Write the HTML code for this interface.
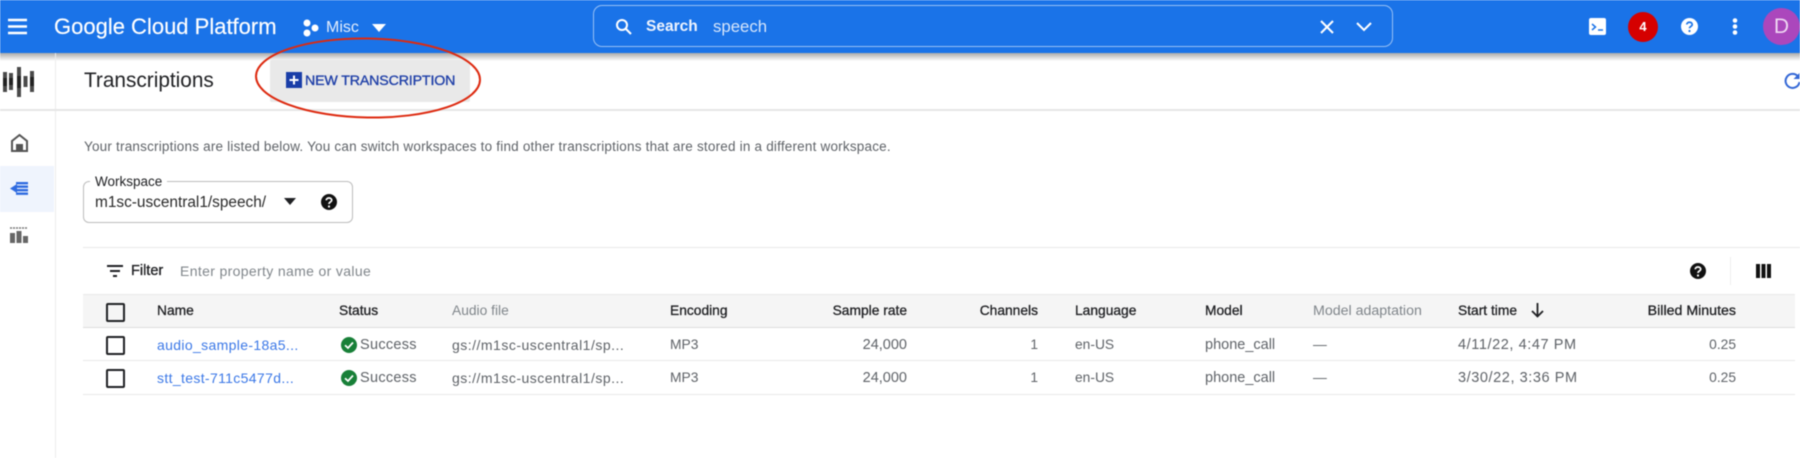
<!DOCTYPE html>
<html><head><meta charset="utf-8"><style>
html,body{margin:0;padding:0;background:#fff}
#p{position:relative;width:1800px;height:458px;overflow:hidden;background:#fff;font-family:"Liberation Sans",sans-serif;filter:blur(.45px)}
.a{position:absolute;white-space:nowrap}
.t{position:absolute;white-space:nowrap;font-size:13.800px;line-height:16px;color:#5f6368}
.h{color:#202124;font-weight:500;-webkit-text-stroke:.3px #202124}
.r{text-align:right}
.g{font-size:14px;letter-spacing:.035em}
.w{font-size:14.500px}
.d{font-size:14.500px;letter-spacing:.04em}
.cb{position:absolute;left:106px;width:15px;height:15px;border:2px solid #202124;border-radius:2px}
svg{position:absolute;overflow:visible}
</style></head><body><div id="p">
<div class="a" style="left:0;top:53px;width:1800px;height:8px;background:linear-gradient(#aaa,#fff)"></div>
<div class="a" style="left:0;top:0;width:1800px;height:53px;background:#1a73e8"></div>
<svg style="left:8px;top:18px" width="20" height="18"><path d="M0 2H19M0 8.500H19M0 15H19" stroke="#fff" stroke-width="2.400"/></svg>
<div class="a" style="left:54px;top:14px;font-size:22px;line-height:26px;color:#fff;-webkit-text-stroke:.15px #fff">Google Cloud Platform</div>
<svg style="left:302px;top:19px" width="18" height="18"><circle cx="5" cy="4" r="3.500" fill="#fff"/><circle cx="5" cy="14" r="3.500" fill="#fff"/><circle cx="13" cy="9" r="3.500" fill="#fff"/></svg>
<div class="a" style="left:326px;top:19px;font-size:16px;line-height:18px;color:#e3edfc">Misc</div>
<svg style="left:372px;top:24px" width="14" height="8"><path d="M0 0H14L7 8Z" fill="#fff"/></svg>
<div class="a" style="left:593px;top:5px;width:798px;height:40px;border:1.500px solid rgba(255,255,255,.55);border-radius:9px"></div>
<svg style="left:615px;top:18px" width="18" height="18"><circle cx="7" cy="7" r="5" fill="none" stroke="#fff" stroke-width="2"/><path d="M10.500 10.500L16 16" stroke="#fff" stroke-width="2"/></svg>
<div class="a" style="left:646px;top:18px;font-size:15.500px;line-height:18px;color:#eef4fe;font-weight:bold">Search</div>
<div class="a" style="left:713px;top:18px;font-size:16.800px;line-height:18px;color:#d5e5fb">speech</div>
<svg style="left:1320px;top:20px" width="14" height="14"><path d="M1 1L13 13M13 1L1 13" stroke="#fff" stroke-width="2"/></svg>
<svg style="left:1356px;top:22px" width="16" height="10"><path d="M1 1L8 8L15 1" fill="none" stroke="#fff" stroke-width="2"/></svg>
<svg style="left:1589px;top:18px" width="17" height="17"><rect width="17" height="17" rx="2" fill="#fff"/><path d="M3 6L6.500 9L3 12" fill="none" stroke="#1a73e8" stroke-width="1.500"/><path d="M9 12H14" stroke="#1a73e8" stroke-width="1.500"/></svg>
<div class="a" style="left:1628px;top:12px;width:30px;height:30px;border-radius:50%;background:#d50000;color:#fff;font-size:13px;font-weight:bold;line-height:30px;text-align:center">4</div>
<svg style="left:1681px;top:18px" width="17" height="17"><circle cx="8.500" cy="8.500" r="8.500" fill="#fff"/><path d="M5.800 6.500C5.800 3.500 11.200 3.500 11.200 6.500C11.200 8.500 8.500 8.300 8.500 10.300" fill="none" stroke="#1a73e8" stroke-width="1.700"/><circle cx="8.500" cy="13" r="1.100" fill="#1a73e8"/></svg>
<svg style="left:1732px;top:18px" width="6" height="17"><circle cx="3" cy="2.500" r="2.300" fill="#fff"/><circle cx="3" cy="8.500" r="2.300" fill="#fff"/><circle cx="3" cy="14.500" r="2.300" fill="#fff"/></svg>
<div class="a" style="left:1763px;top:8px;width:37px;height:37px;border-radius:50%;background:#ab47bc;color:#eed7f2;font-size:21px;line-height:37px;text-align:center">D</div>

<div class="a" style="left:54.500px;top:53px;width:1.500px;height:405px;background:#ececec"></div>
<div class="a" style="left:0;top:109px;width:1800px;height:1.500px;background:#e6e6e6"></div>
<svg style="left:0;top:0" width="40" height="100"><path d="M5 72V92M11 73V90M19 67V97M25.500 76V87M32 71V92" stroke="#4a4a4a" stroke-width="4"/><path d="M5 78V86M11 78V85M19 76V88M32 77V86" stroke="#222" stroke-width="4"/></svg>
<div class="a" style="left:84px;top:69px;font-size:20.800px;line-height:24px;color:#202124">Transcriptions</div>
<div class="a" style="left:270px;top:60px;width:200px;height:42px;background:#e9e9e9;border-radius:2px"></div>
<svg style="left:286px;top:72px" width="16" height="16"><rect width="16" height="16" fill="#1a3ea8"/><path d="M8 3.500V12.500M3.500 8H12.500" stroke="#fff" stroke-width="2"/></svg>
<div class="a" style="left:305px;top:73px;font-size:14.200px;line-height:16px;color:#2040a8;-webkit-text-stroke:.35px #2040a8;letter-spacing:-.01em">NEW TRANSCRIPTION</div>
<svg style="left:0;top:0" width="1800" height="458"><ellipse cx="368" cy="78" rx="112" ry="39.500" fill="none" stroke="#dd2a10" stroke-width="2" transform="rotate(1 368 78)"/></svg>
<svg style="left:1784px;top:72px" width="18" height="18"><path d="M14 4.500A7 7 0 1 0 15.500 10" fill="none" stroke="#3367d6" stroke-width="2"/><path d="M15.500 1V7H9.500Z" fill="#3367d6"/></svg>

<svg style="left:11px;top:134px" width="17" height="18"><path d="M1 17V7L8.500 1L16 7V17Z" fill="none" stroke="#555" stroke-width="2"/><rect x="5" y="10" width="7" height="7" fill="#555"/></svg>
<div class="a" style="left:0;top:166px;width:54px;height:46px;background:#eff4fd"></div>
<svg style="left:10px;top:182px" width="18" height="13"><path d="M6 1.200H18M6 4.700H18M6 8.200H18M6 11.700H18" stroke="#2f6be0" stroke-width="2.400"/><path d="M0 6.500L7 2V11Z" fill="#2f6be0"/></svg>
<svg style="left:10px;top:227px" width="18" height="16"><path d="M0 1H18" stroke="#777" stroke-width="1.500" stroke-dasharray="2 1"/><rect y="6" width="5" height="10" fill="#666"/><rect x="6.500" y="4" width="5" height="12" fill="#666"/><rect x="13" y="9" width="5" height="7" fill="#666"/></svg>

<div class="a" style="left:84px;top:139px;font-size:13.500px;line-height:16px;color:#5f6368;letter-spacing:.015em">Your transcriptions are listed below. You can switch workspaces to find other transcriptions that are stored in a different workspace.</div>
<div class="a" style="left:83px;top:181px;width:268px;height:40px;border:1px solid #bdbdbd;border-radius:6px"></div>
<div class="a" style="left:90px;top:174px;padding:0 5px;background:#fff;font-size:13.500px;line-height:16px;color:#202124">Workspace</div>
<div class="a" style="left:95px;top:194px;font-size:15.400px;line-height:17px;color:#2a2a2a">m1sc-uscentral1/speech/</div>
<svg style="left:284px;top:198px" width="12" height="7"><path d="M0 0H12L6 7Z" fill="#202124"/></svg>
<svg style="left:321px;top:194px" width="16" height="16"><circle cx="8" cy="8" r="8" fill="#111"/><path d="M5.300 6.200C5.300 3.300 10.700 3.300 10.700 6.200C10.700 8 8 8 8 10" fill="none" stroke="#fff" stroke-width="1.700"/><circle cx="8" cy="12.500" r="1.100" fill="#fff"/></svg>

<div class="a" style="left:83px;top:247px;width:1717px;height:1px;background:#e8e8e8"></div>
<svg style="left:107px;top:265px" width="16" height="12"><path d="M0 1H16M3 6H13M6 11H10" stroke="#202124" stroke-width="2"/></svg>
<div class="a h" style="left:131px;top:263px;font-size:14.500px;line-height:16px">Filter</div>
<div class="t" style="left:180px;top:263px;color:#80868b;font-size:14px;letter-spacing:.025em">Enter property name or value</div>
<svg style="left:1690px;top:263px" width="16" height="16"><circle cx="8" cy="8" r="8" fill="#111"/><path d="M5.300 6.200C5.300 3.300 10.700 3.300 10.700 6.200C10.700 8 8 8 8 10" fill="none" stroke="#fff" stroke-width="1.700"/><circle cx="8" cy="12.500" r="1.100" fill="#fff"/></svg>
<div class="a" style="left:1730px;top:257px;width:1px;height:28px;background:#eee"></div>
<svg style="left:1756px;top:264px" width="15" height="14"><path d="M0 0H4V14H0ZM5.500 0H9.500V14H5.500ZM11 0H15V14H11Z" fill="#111"/></svg>

<div class="a" style="left:83px;top:294px;width:1712px;height:33px;background:#f5f5f5;border-top:1px solid #eaeaea;box-sizing:border-box"></div>
<div class="a" style="left:83px;top:327px;width:1712px;height:1px;background:#ddd"></div>
<div class="a" style="left:83px;top:360px;width:1712px;height:1px;background:#e8e8e8"></div>
<div class="a" style="left:83px;top:394px;width:1712px;height:1px;background:#e8e8e8"></div>
<div class="cb" style="top:303px"></div><div class="cb" style="top:336px"></div><div class="cb" style="top:369px"></div>

<div class="t h" style="left:157px;top:303px">Name</div>
<div class="t h" style="left:339px;top:303px">Status</div>
<div class="t" style="left:452px;top:303px;color:#80868b">Audio file</div>
<div class="t h" style="left:670px;top:303px">Encoding</div>
<div class="t h r" style="right:893px;top:303px">Sample rate</div>
<div class="t h r" style="right:762px;top:303px">Channels</div>
<div class="t h" style="left:1075px;top:303px">Language</div>
<div class="t h" style="left:1205px;top:303px">Model</div>
<div class="t" style="left:1313px;top:303px;color:#80868b;font-size:14.200px">Model adaptation</div>
<div class="t h" style="left:1458px;top:303px">Start time</div>
<svg style="left:1531px;top:303px" width="13" height="15"><path d="M6.500 0V13M1 8L6.500 13.500L12 8" fill="none" stroke="#202124" stroke-width="1.800"/></svg>
<div class="t h r" style="right:64px;top:303px;font-size:14.200px">Billed Minutes</div>

<div class="t" style="left:157px;top:337px;color:#3b78e7;font-size:14px;letter-spacing:.025em">audio_sample-18a5...</div>
<svg style="left:341px;top:337px" width="16" height="16"><circle cx="8" cy="8" r="8" fill="#188038"/><path d="M4 8.200L7 11L12 5.500" fill="none" stroke="#fff" stroke-width="1.700"/></svg>
<div class="t w" style="left:360px;top:337px;letter-spacing:.02em">Success</div>
<div class="t g" style="left:452px;top:337px">gs://m1sc-uscentral1/sp...</div>
<div class="t" style="left:670px;top:337px">MP3</div>
<div class="t r w" style="right:893px;top:337px">24,000</div>
<div class="t r" style="right:762px;top:337px">1</div>
<div class="t" style="left:1075px;top:337px">en-US</div>
<div class="t w" style="left:1205px;top:337px">phone_call</div>
<div class="t" style="left:1313px;top:337px">—</div>
<div class="t d" style="left:1458px;top:337px">4/11/22, 4:47 PM</div>
<div class="t r" style="right:64px;top:337px">0.25</div>

<div class="t" style="left:157px;top:370px;color:#3b78e7;font-size:14px;letter-spacing:.025em">stt_test-711c5477d...</div>
<svg style="left:341px;top:370px" width="16" height="16"><circle cx="8" cy="8" r="8" fill="#188038"/><path d="M4 8.200L7 11L12 5.500" fill="none" stroke="#fff" stroke-width="1.700"/></svg>
<div class="t w" style="left:360px;top:370px;letter-spacing:.02em">Success</div>
<div class="t g" style="left:452px;top:370px">gs://m1sc-uscentral1/sp...</div>
<div class="t" style="left:670px;top:370px">MP3</div>
<div class="t r w" style="right:893px;top:370px">24,000</div>
<div class="t r" style="right:762px;top:370px">1</div>
<div class="t" style="left:1075px;top:370px">en-US</div>
<div class="t w" style="left:1205px;top:370px">phone_call</div>
<div class="t" style="left:1313px;top:370px">—</div>
<div class="t d" style="left:1458px;top:370px">3/30/22, 3:36 PM</div>
<div class="t r" style="right:64px;top:370px">0.25</div>
</div></body></html>
